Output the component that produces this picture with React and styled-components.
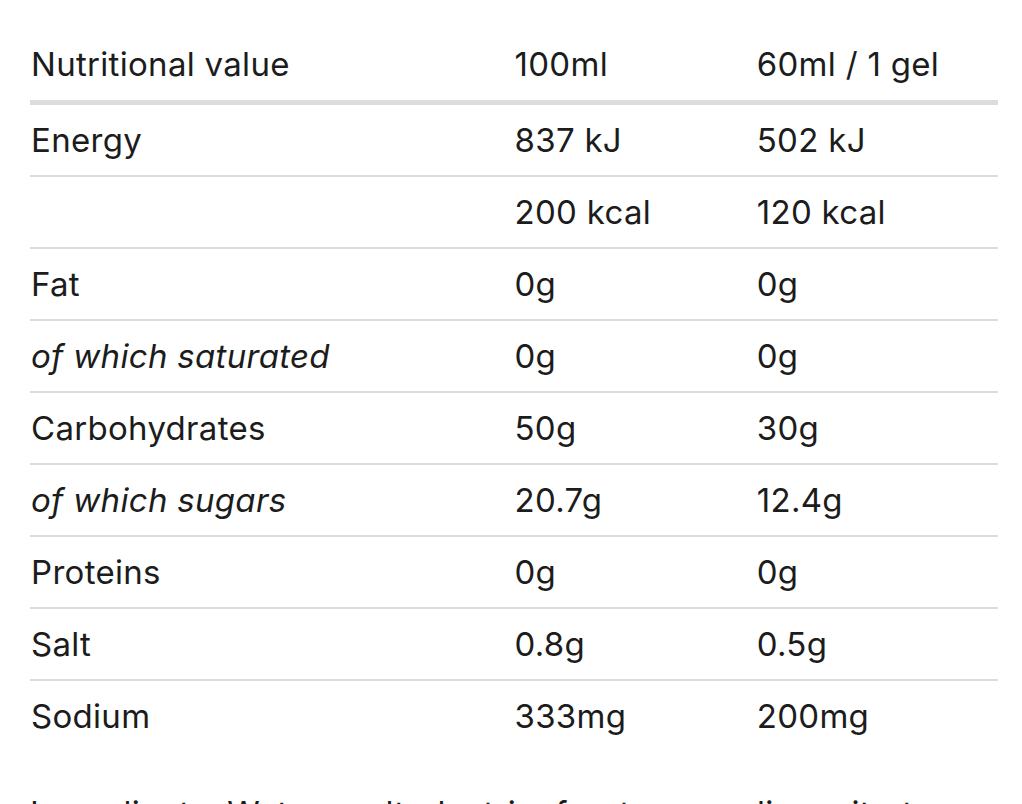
import React from "react";
import styled, { createGlobalStyle } from "styled-components";

const rows = [
  { label: "Energy", per100: "837 kJ", perGel: "502 kJ" },
  { label: "", per100: "200 kcal", perGel: "120 kcal" },
  { label: "Fat", per100: "0g", perGel: "0g" },
  { label: "of which saturated", per100: "0g", perGel: "0g", sub: true },
  { label: "Carbohydrates", per100: "50g", perGel: "30g" },
  { label: "of which sugars", per100: "20.7g", perGel: "12.4g", sub: true },
  { label: "Proteins", per100: "0g", perGel: "0g" },
  { label: "Salt", per100: "0.8g", perGel: "0.5g" },
  { label: "Sodium", per100: "333mg", perGel: "200mg" },
];

const App = () => {
  return (
    <>
      <GlobalStyle />
      <Page>
        <Table>
          <thead>
            <tr>
              <HeadCell>Nutritional value</HeadCell>
              <HeadCell>100ml</HeadCell>
              <HeadCell>60ml / 1 gel</HeadCell>
            </tr>
          </thead>
          <tbody>
            {rows.map((row, index) => (
              <Row key={index}>
                <Cell $italic={row.sub}>{row.label}</Cell>
                <Cell>{row.per100}</Cell>
                <Cell>{row.perGel}</Cell>
              </Row>
            ))}
          </tbody>
        </Table>
        <Ingredients>
          Ingredients: Water, maltodextrin, fructose, sodium citrate, natural
          flavouring, citric acid, preservative (potassium sorbate).
        </Ingredients>
      </Page>
    </>
  );
};

export default App;

const GlobalStyle = createGlobalStyle`
  body {
    margin: 0;
    background: #ffffff;
    color: #1c1c1c;
    font-family: Inter, "Noto Sans", sans-serif;
  }
`;

const Page = styled.div`
  padding: 28px 24px 0 30px;
  width: 968px;
`;

const Table = styled.table`
  width: 100%;
  border-collapse: collapse;
  table-layout: fixed;
  font-size: 33px;
  letter-spacing: 0.3px;

  th:nth-child(1),
  td:nth-child(1) {
    width: 50%;
  }
  th:nth-child(2),
  td:nth-child(2),
  th:nth-child(3),
  td:nth-child(3) {
    width: 25%;
  }
`;

const HeadCell = styled.th`
  height: 72px;
  padding: 0 0 0 1px;
  text-align: left;
  font-weight: 400;
  vertical-align: middle;
  border-bottom: 5px solid #dcdcdc;
`;

const Row = styled.tr`
  border-bottom: 2px solid #dcdcdc;

  &:last-child {
    border-bottom: none;
  }
`;

const Cell = styled.td`
  height: 70px;
  padding: 0 0 0 1px;
  vertical-align: middle;
  font-style: ${(p) => (p.$italic ? "italic" : "normal")};
`;

const Ingredients = styled.p`
  margin: 38px 0 0;
  font-size: 33px;
  letter-spacing: 0.3px;
  line-height: 1.5;
`;
